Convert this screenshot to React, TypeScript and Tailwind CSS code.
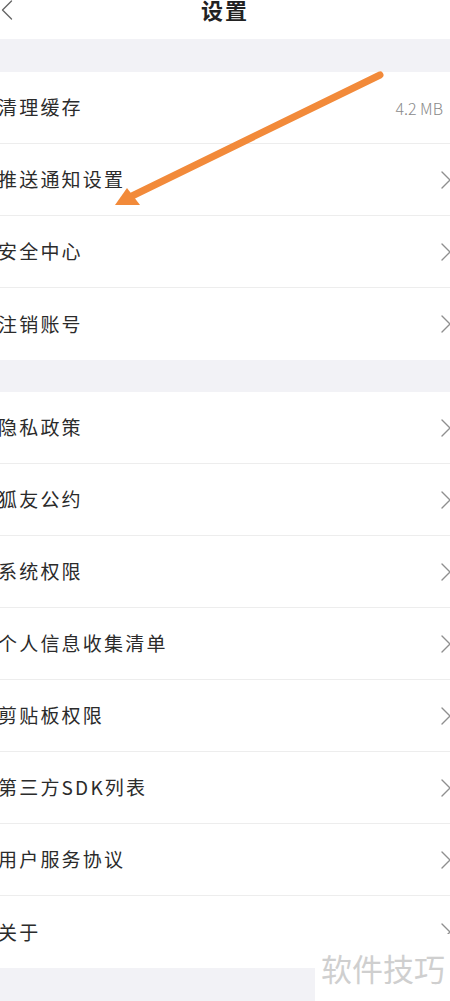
import { ChevronRight, ChevronLeft } from "lucide-react";

const font = { fontFamily: '"Noto Sans CJK SC", "Noto Sans", sans-serif' };

type Row = { label: string; value?: string };

const groupOne: Row[] = [
  { label: "清理缓存", value: "4.2 MB" },
  { label: "推送通知设置" },
  { label: "安全中心" },
  { label: "注销账号" },
];

const groupTwo: Row[] = [
  { label: "隐私政策" },
  { label: "狐友公约" },
  { label: "系统权限" },
  { label: "个人信息收集清单" },
  { label: "剪贴板权限" },
  { label: "第三方SDK列表" },
  { label: "用户服务协议" },
  { label: "关于" },
];

function SettingRow({ row, last }: { row: Row; last: boolean }) {
  return (
    <div
      className={`flex h-[72px] items-center justify-between bg-white ${
        last ? "" : "border-b border-[#ededed]"
      }`}
    >
      <span className="-ml-[2px] text-[19px] tracking-[2.2px] text-[#2b2b2b]">
        {row.label}
      </span>
      {row.value ? (
        <span className="mr-[7px] text-[16px] font-light text-[#8a8a8a]">{row.value}</span>
      ) : (
        <ChevronRight
          className="-mr-[12px] h-[32px] w-[32px] text-[#8f8f8f]"
          strokeWidth={1}
        />
      )}
    </div>
  );
}

export default function App() {
  return (
    <div
      className="relative h-[1001px] w-[450px] overflow-hidden bg-[#f2f2f6]"
      style={font}
    >
      {/* Header */}
      <div className="relative flex h-[39px] items-start justify-center bg-white">
        <ChevronLeft
          className="absolute -left-[11px] -top-[8px] h-[36px] w-[36px] text-[#666]"
          strokeWidth={0.9}
        />
        <span className="-mt-[4px] text-[22px] font-bold leading-[26px] tracking-[2px] text-[#222]">
          设置
        </span>
      </div>

      <div className="h-[33px]" />

      <div className="bg-white">
        {groupOne.map((row, i) => (
          <SettingRow key={row.label} row={row} last={i === groupOne.length - 1} />
        ))}
      </div>

      <div className="h-[32px]" />

      <div className="bg-white">
        {groupTwo.map((row, i) => (
          <SettingRow key={row.label} row={row} last={i === groupTwo.length - 1} />
        ))}
      </div>

      {/* Annotation arrow */}
      <svg
        className="pointer-events-none absolute left-0 top-0"
        width="450"
        height="1001"
        viewBox="0 0 450 1001"
      >
        <line
          x1="380"
          y1="75"
          x2="132"
          y2="196"
          stroke="#f28a3a"
          strokeWidth="7"
          strokeLinecap="round"
        />
        <polygon points="115,205 127,188 140,205" fill="#f28a3a" />
      </svg>

      {/* Watermark */}
      <div className="absolute bottom-0 right-0 h-[67px] w-[135px] bg-white" />
      <span className="absolute right-[5px] top-[948px] text-[31px] leading-[40px] text-[#cfcfcf]">
        软件技巧
      </span>
    </div>
  );
}
